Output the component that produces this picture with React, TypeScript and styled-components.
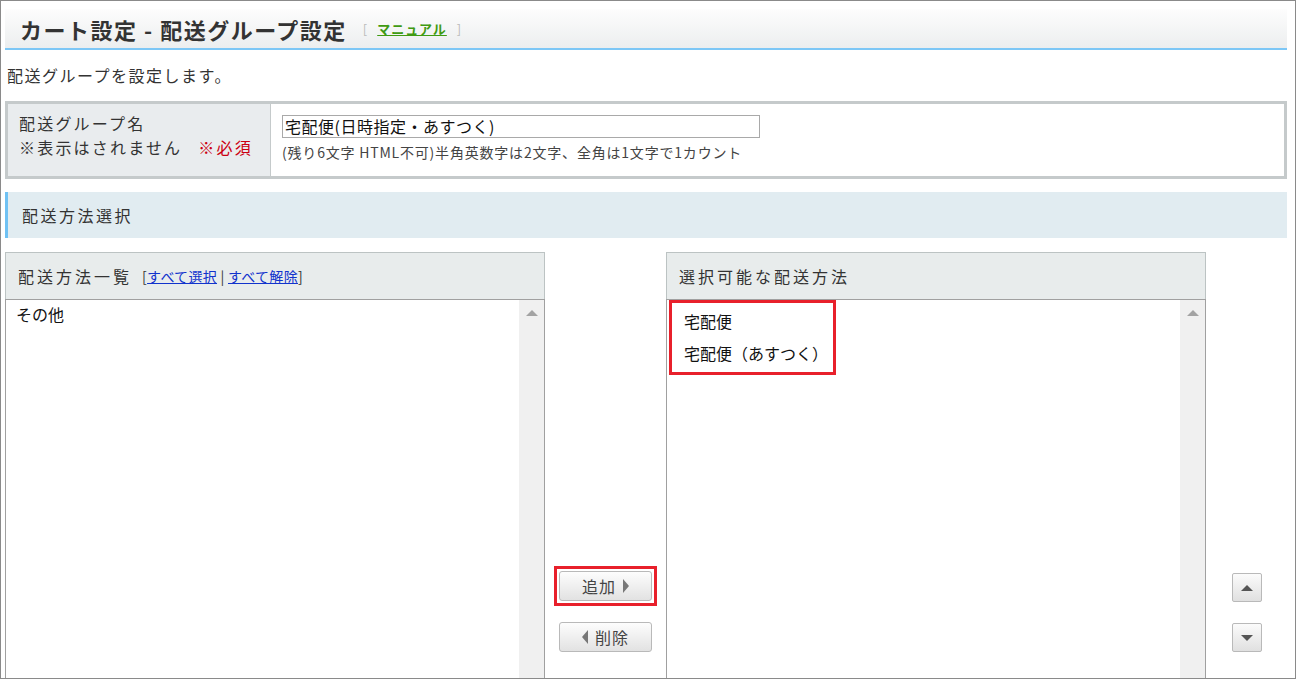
import React from 'react';
import styled, { createGlobalStyle } from 'styled-components';

const GlobalStyle = createGlobalStyle`
    html, body {
        margin: 0;
        padding: 0;
        background: #ffffff;
    }
    body {
        font-family: "Noto Sans CJK JP", "Noto Sans", sans-serif;
        color: #333333;
    }
`;

const Frame = styled.div`
    width: 1296px;
    height: 679px;
    box-sizing: border-box;
    border: 1px solid #8a8a8a;
    padding: 8px 8px 0 4px;
    overflow: hidden;
`;

const PageHeader = styled.div`
    height: 39px;
    display: flex;
    align-items: center;
    padding-left: 15px;
    background: linear-gradient(#fdfdfd, #eceeef);
    border-bottom: 2px solid #7dc7f6;
`;

const Title = styled.h1`
    margin: 0;
    font-size: 22px;
    font-weight: bold;
    letter-spacing: 1.5px;
    color: #333333;
`;

const Manual = styled.span`
    margin-left: 16px;
    font-size: 13px;
    color: #bbbbbb;

    a {
        margin: 0 10px;
        color: #3f9a12;
        font-weight: bold;
        letter-spacing: 1px;
        text-decoration: underline;
    }
`;

const Lead = styled.p`
    margin: 15px 0 0 2px;
    font-size: 16px;
    line-height: 20px;
    letter-spacing: 1.5px;
`;

const FormTable = styled.div`
    margin-top: 16px;
    height: 78px;
    box-sizing: border-box;
    border: 3px solid #c5cacb;
    display: flex;
`;

const LabelCell = styled.div`
    width: 263px;
    box-sizing: border-box;
    padding: 8px 11px;
    background: #e9ecee;
    border-right: 1px solid #c5cacb;
    font-size: 16px;
    line-height: 23.5px;
    letter-spacing: 2.2px;
`;

const LabelLine = styled.div`
    white-space: nowrap;
`;

const Required = styled.span`
    margin-left: 16px;
    color: #cc0011;
`;

const ValueCell = styled.div`
    flex: 1;
    padding: 10px 11px;
    background: #ffffff;
`;

const NameInput = styled.input`
    width: 478px;
    height: 23px;
    box-sizing: border-box;
    border: 1px solid #a9a9a9;
    padding: 0 2px;
    font-family: inherit;
    font-size: 16px;
    letter-spacing: 0.5px;
    color: #111111;
    outline: none;
`;

const Hint = styled.div`
    margin-top: 5px;
    font-size: 14px;
    line-height: 18px;
    letter-spacing: 0.8px;
    color: #444444;
`;

const SectionBar = styled.div`
    margin-top: 13px;
    height: 46px;
    box-sizing: border-box;
    display: flex;
    align-items: center;
    padding-left: 14px;
    background: #e1ecf1;
    border-left: 3px solid #6fc1f3;
    font-size: 16px;
    letter-spacing: 2.5px;
`;

const Columns = styled.div`
    margin-top: 14px;
    display: flex;
    align-items: flex-start;
`;

const Panel = styled.div`
    width: 540px;
    flex-shrink: 0;
`;

const PanelHead = styled.div`
    height: 47px;
    box-sizing: border-box;
    display: flex;
    align-items: center;
    padding-left: 12px;
    background: #e8ecec;
    border: 1px solid #bcc3c3;
    border-bottom: none;
    font-size: 16px;
    letter-spacing: 3px;
`;

const HeadLinks = styled.span`
    margin-left: 10px;
    font-size: 14px;
    letter-spacing: 0.3px;

    a {
        color: #1133cc;
        text-decoration: underline;
    }
`;

const ListBox = styled.div`
    height: 420px;
    box-sizing: border-box;
    border: 1px solid #a0a0a0;
    display: flex;
    background: #ffffff;
`;

const ListItems = styled.div`
    flex: 1;
    padding: 5px 10px;
    font-size: 16px;
    line-height: 18px;
    color: #111111;
`;

const HighlightArea = styled.div`
    flex: 1;
`;

const Highlight = styled.div`
    width: 167px;
    box-sizing: border-box;
    margin-left: 2px;
    padding: 2px 0 3px 12px;
    border: 3px solid #e8202b;
`;

const HighlightItem = styled.div`
    font-size: 16px;
    line-height: 32px;
    color: #111111;
`;

const ScrollTrack = styled.div`
    width: 25px;
    flex-shrink: 0;
    background: #f0f0f0;
    display: flex;
    justify-content: center;
    padding-top: 10px;
    box-sizing: border-box;
`;

const ScrollArrow = styled.div`
    width: 0;
    height: 0;
    border-left: 6px solid transparent;
    border-right: 6px solid transparent;
    border-bottom: 6px solid #a3a3a3;
`;

const MoveColumn = styled.div`
    width: 121px;
    flex-shrink: 0;
    box-sizing: border-box;
    padding: 319px 0 0 14px;
    display: flex;
    flex-direction: column;
    gap: 21px;
`;

const OrderColumn = styled.div`
    flex: 1;
    box-sizing: border-box;
    padding: 321px 0 0 26px;
    display: flex;
    flex-direction: column;
    gap: 21px;
`;

const Marker = styled.div`
    align-self: flex-start;
    margin: -5px;
    padding: 2px;
    border: 3px solid #e8202b;
`;

const Button = styled.button`
    width: 93px;
    height: 30px;
    box-sizing: border-box;
    display: flex;
    align-items: center;
    justify-content: center;
    gap: 7px;
    border: 1px solid #b9b9b9;
    border-radius: 3px;
    background: linear-gradient(#fdfdfd, #e2e2e2);
    font-family: inherit;
    font-size: 16px;
    letter-spacing: 1px;
    color: #444444;
    padding: 0;
`;

const IconButton = styled.button`
    width: 30px;
    height: 29px;
    box-sizing: border-box;
    display: flex;
    align-items: center;
    justify-content: center;
    border: 1px solid #b9b9b9;
    border-radius: 2px;
    background: linear-gradient(#fbfbfb, #e0e0e0);
    padding: 0;
`;

const Tri = styled.span<{ $dir: 'up' | 'down' | 'left' | 'right' }>`
    width: 0;
    height: 0;
    border-style: solid;
    border-color: transparent;
    ${(p) => {
        if (p.$dir === 'up') return 'border-width: 0 6px 6px 6px; border-bottom-color: #555;';
        if (p.$dir === 'down') return 'border-width: 6px 6px 0 6px; border-top-color: #555;';
        if (p.$dir === 'left') return 'border-width: 7px 6px 7px 0; border-right-color: #777;';
        return 'border-width: 7px 0 7px 6px; border-left-color: #777;';
    }}
`;

const App = () => {
    return (
        <>
            <GlobalStyle />
            <Frame>
                <PageHeader>
                    <Title>カート設定 - 配送グループ設定</Title>
                    <Manual>
                        [<a>マニュアル</a>]
                    </Manual>
                </PageHeader>
                <Lead>配送グループを設定します。</Lead>
                <FormTable>
                    <LabelCell>
                        <LabelLine>配送グループ名</LabelLine>
                        <LabelLine>
                            ※表示はされません<Required>※必須</Required>
                        </LabelLine>
                    </LabelCell>
                    <ValueCell>
                        <NameInput defaultValue="宅配便(日時指定・あすつく)" />
                        <Hint>(残り6文字 HTML不可)半角英数字は2文字、全角は1文字で1カウント</Hint>
                    </ValueCell>
                </FormTable>
                <SectionBar>配送方法選択</SectionBar>
                <Columns>
                    <Panel>
                        <PanelHead>
                            配送方法一覧
                            <HeadLinks>
                                [<a>すべて選択</a> | <a>すべて解除</a>]
                            </HeadLinks>
                        </PanelHead>
                        <ListBox>
                            <ListItems>その他</ListItems>
                            <ScrollTrack>
                                <ScrollArrow />
                            </ScrollTrack>
                        </ListBox>
                    </Panel>
                    <MoveColumn>
                        <Marker>
                            <Button>
                                追加<Tri $dir="right" />
                            </Button>
                        </Marker>
                        <Button>
                            <Tri $dir="left" />削除
                        </Button>
                    </MoveColumn>
                    <Panel>
                        <PanelHead>選択可能な配送方法</PanelHead>
                        <ListBox>
                            <HighlightArea>
                                <Highlight>
                                    <HighlightItem>宅配便</HighlightItem>
                                    <HighlightItem>宅配便（あすつく）</HighlightItem>
                                </Highlight>
                            </HighlightArea>
                            <ScrollTrack>
                                <ScrollArrow />
                            </ScrollTrack>
                        </ListBox>
                    </Panel>
                    <OrderColumn>
                        <IconButton>
                            <Tri $dir="up" />
                        </IconButton>
                        <IconButton>
                            <Tri $dir="down" />
                        </IconButton>
                    </OrderColumn>
                </Columns>
            </Frame>
        </>
    );
};

export default App;
